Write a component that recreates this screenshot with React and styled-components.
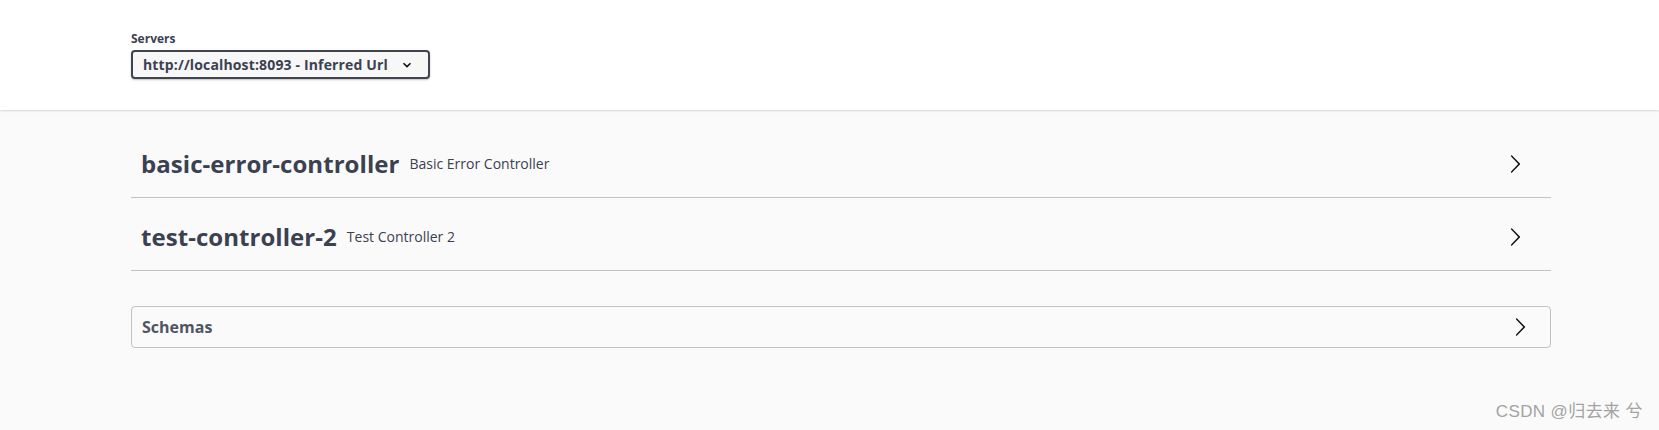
import React from "react";
import styled, { createGlobalStyle } from "styled-components";

const GlobalStyle = createGlobalStyle`
  html, body {
    margin: 0;
    padding: 0;
    background: #fafafa;
    font-family: "Open Sans", "Noto Sans CJK SC", sans-serif;
    color: #3b4151;
  }
  * { box-sizing: border-box; }
`;

const Page = styled.div`
  position: relative;
  min-height: 430px;
  background: #fafafa;
`;

const SchemeContainer = styled.header`
  background: #fff;
  box-shadow: 0 1px 2px 0 rgba(0, 0, 0, 0.15);
  height: 110px;
  padding-top: 31px;
`;

const Wrapper = styled.div`
  width: 1420px;
  margin-left: 131px;
`;

const ServersLabel = styled.label`
  display: block;
  font-size: 12px;
  font-weight: 700;
  line-height: 16px;
  margin-bottom: 3px;
`;

const Select = styled.div`
  display: inline-flex;
  align-items: center;
  width: 299px;
  height: 29px;
  padding: 0 16px 0 10px;
  border: 2px solid #41444e;
  border-radius: 4px;
  background: #f7f7f7;
  box-shadow: 0 1px 2px 0 rgba(0, 0, 0, 0.25);
  font-size: 14px;
  font-weight: 700;
  letter-spacing: 0.15px;
  color: #3b4151;
  justify-content: space-between;
`;

const Main = styled.div`
  padding-top: 20px;
`;

const TagRow = styled.div`
  display: flex;
  align-items: center;
  height: 68px;
  padding: 0 26px 0 10px;
  border-bottom: 1px solid rgba(59, 65, 81, 0.3);
  margin-bottom: 5px;
`;

const TagTitle = styled.h4`
  margin: 0;
  font-size: 24px;
  font-weight: 700;
  letter-spacing: 0.05px;
  color: #3b4151;
`;

const TagDesc = styled.small`
  flex: 1;
  padding: 0 10px;
  font-size: 14px;
  font-weight: 400;
  color: #3b4151;
`;

const Models = styled.section`
  margin-top: 35px;
  height: 42px;
  display: flex;
  align-items: center;
  padding: 0 20px 0 10px;
  border: 1px solid rgba(59, 65, 81, 0.3);
  border-radius: 4px;
`;

const ModelsTitle = styled.h4`
  flex: 1;
  margin: 0;
  font-size: 16px;
  font-weight: 700;
  color: #505562;
`;

const Watermark = styled.div`
  position: absolute;
  right: 16px;
  bottom: 8px;
  font-family: "Liberation Sans", "Noto Sans CJK SC", sans-serif;
  font-size: 17px;
  color: #a3a3a3;
  letter-spacing: 0.4px;
`;

const Arrow = () => (
  <svg width="20" height="20" viewBox="0 0 20 20">
    <path
      fill="#111"
      d="M13.25 10L6.109 2.58a.697.697 0 0 1 0-.979.68.68 0 0 1 .969 0l7.830 7.908a.697.697 0 0 1 0 .979l-7.83 7.908a.68.68 0 0 1-.969 0 .697.697 0 0 1 0-.979L13.25 10z"
    />
  </svg>
);

const Caret = () => (
  <svg width="10" height="10" viewBox="0 0 10 10">
    <path d="M1.5 3.2 L5 6.6 L8.5 3.2" fill="none" stroke="#111" strokeWidth="1.6" />
  </svg>
);

const tags = [
  { name: "basic-error-controller", desc: "Basic Error Controller" },
  { name: "test-controller-2", desc: "Test Controller 2" },
];

export default function App() {
  return (
    <Page>
      <GlobalStyle />
      <SchemeContainer>
        <Wrapper>
          <ServersLabel>Servers</ServersLabel>
          <Select>
            <span>http://localhost:8093 - Inferred Url</span>
            <Caret />
          </Select>
        </Wrapper>
      </SchemeContainer>
      <Main>
        <Wrapper>
          {tags.map((t) => (
            <TagRow key={t.name}>
              <TagTitle>{t.name}</TagTitle>
              <TagDesc>{t.desc}</TagDesc>
              <Arrow />
            </TagRow>
          ))}
          <Models>
            <ModelsTitle>Schemas</ModelsTitle>
            <Arrow />
          </Models>
        </Wrapper>
      </Main>
      <Watermark>CSDN @归去来 兮</Watermark>
    </Page>
  );
}
